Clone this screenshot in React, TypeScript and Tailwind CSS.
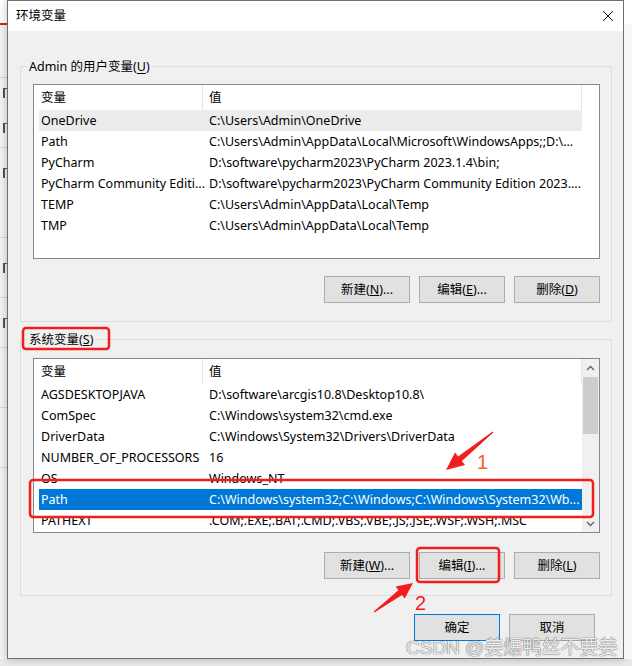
import React from 'react';

type Row = [string, string];

const userRows: Row[] = [
  ['OneDrive', 'C:\\Users\\Admin\\OneDrive'],
  ['Path', 'C:\\Users\\Admin\\AppData\\Local\\Microsoft\\WindowsApps;;D:\\...'],
  ['PyCharm', 'D:\\software\\pycharm2023\\PyCharm 2023.1.4\\bin;'],
  ['PyCharm Community Editi...', 'D:\\software\\pycharm2023\\PyCharm Community Edition 2023....'],
  ['TEMP', 'C:\\Users\\Admin\\AppData\\Local\\Temp'],
  ['TMP', 'C:\\Users\\Admin\\AppData\\Local\\Temp'],
];

const sysRows: Row[] = [
  ['AGSDESKTOPJAVA', 'D:\\software\\arcgis10.8\\Desktop10.8\\'],
  ['ComSpec', 'C:\\Windows\\system32\\cmd.exe'],
  ['DriverData', 'C:\\Windows\\System32\\Drivers\\DriverData'],
  ['NUMBER_OF_PROCESSORS', '16'],
  ['OS', 'Windows_NT'],
  ['Path', 'C:\\Windows\\system32;C:\\Windows;C:\\Windows\\System32\\Wb...'],
  ['PATHEXT', '.COM;.EXE;.BAT;.CMD;.VBS;.VBE;.JS;.JSE;.WSF;.WSH;.MSC'],
];

function Chevron({ up }: { up?: boolean }) {
  return (
    <svg width="9" height="6" viewBox="0 0 9 6" className={up ? '' : 'rotate-180'}>
      <path d="M1 5 L4.5 1.5 L8 5" fill="none" stroke="#606060" strokeWidth="1.3" />
    </svg>
  );
}

function Scrollbar() {
  return (
    <div className="w-[17px] shrink-0 bg-[#f0f0f0] flex flex-col">
      <div className="h-[17px] flex items-center justify-center">
        <Chevron up />
      </div>
      <div className="mx-px mt-px h-[57px] bg-[#cdcdcd]" />
      <div className="flex-1" />
      <div className="h-[17px] flex items-center justify-center">
        <Chevron />
      </div>
    </div>
  );
}

interface ListProps {
  rows: Row[];
  selected: number;
  active?: boolean;
  scroll?: boolean;
}

function VarList({ rows, selected, active, scroll }: ListProps) {
  return (
    <div className="h-[175px] border border-[#828790] bg-white flex overflow-hidden">
      <div className="w-[548px] shrink-0 flex flex-col">
        {/* header */}
        <div className="h-[25px] shrink-0 flex border-r border-[#e5e5e5]">
          <div className="w-[169px] shrink-0 border-r border-[#e5e5e5] pl-[7px] pt-px flex items-center">变量</div>
          <div className="flex-1 pl-[6px] pt-px flex items-center">值</div>
        </div>
        {rows.map(([name, value], i) => {
          const sel = i === selected;
          return (
            <div
              key={name + i}
              className={
                'h-[21px] shrink-0 ml-[5px] pt-[2px] flex items-center whitespace-nowrap ' +
                (sel ? (active ? 'bg-[#0078d7] text-white' : 'bg-[#ececec]') : '')
              }
            >
              <div className="w-[168px] shrink-0 pl-[2px] overflow-hidden">{name}</div>
              <div className="flex-1 pl-[2px] overflow-hidden">{value}</div>
            </div>
          );
        })}
      </div>
      {scroll ? <Scrollbar /> : <div className="flex-1" />}
    </div>
  );
}

function Btn({ children, primary }: { children: React.ReactNode; primary?: boolean }) {
  return (
    <div
      className={
        'w-[86px] h-[27px] pt-px flex items-center justify-center bg-[#e1e1e1] border ' +
        (primary ? 'border-[#0078d7]' : 'border-[#adadad]')
      }
    >
      {children}
    </div>
  );
}

function Group({ title, children }: { title: React.ReactNode; children: React.ReactNode }) {
  return (
    <fieldset className="border border-[#dcdcdc]">
      <legend className="ml-[6px] px-[2px] leading-[20px]">
        <span className="relative top-px">{title}</span>
      </legend>
      {children}
    </fieldset>
  );
}

function EdgeBand({ h, line, mark }: { h: number; line?: boolean; mark?: boolean }) {
  return (
    <div
      className={'w-[7px] flex items-center justify-end ' + (line ? 'border-b border-[#dadada]' : '')}
      style={{ height: h }}
    >
      {mark && <div className="w-[4px] h-[10px] border-l-2 border-t border-[#555]" />}
    </div>
  );
}

export default function App() {
  return (
    <div className="relative w-[632px] h-[666px] overflow-hidden bg-[#e9e9e9] font-['Noto_Sans','Noto_Sans_CJK_SC',sans-serif] text-[12.5px] text-black">
      <div className="flex">
        {/* window behind, left edge */}
        <div className="w-[7px] shrink-0 flex flex-col bg-[#f3f3f3]">
          <div className="h-[23px] bg-white" />
          <div className="h-[2px] bg-[#e02020]" />
          <div className="h-[53px] border-b border-[#d5d5d5]" />
          <EdgeBand h={30} mark />
          <EdgeBand h={40} mark line />
          <EdgeBand h={50} mark />
          <EdgeBand h={40} line />
          <EdgeBand h={60} mark line />
          <EdgeBand h={50} mark line />
          <EdgeBand h={60} line />
          <EdgeBand h={60} line />
        </div>

        {/* dialog */}
        <div className="w-[617px] h-[659px] shrink-0 border border-[#707070] bg-[#f0f0f0] flex flex-col shadow-[0_0_8px_rgba(0,0,0,0.25)]">
          <div className="h-[30px] shrink-0 bg-white flex items-center pl-[8px] pr-[9px]">
            <span className="flex-1">环境变量</span>
            <svg width="12" height="12" viewBox="0 0 12 12">
              <path d="M1 1 L11 11 M11 1 L1 11" stroke="#111" strokeWidth="1" />
            </svg>
          </div>

          <div className="pl-[12px] pr-[11px] flex flex-col">
            <div className="mt-[25px]">
              <Group title={<>Admin 的用户变量(<u className="underline-offset-2">U</u>)</>}>
                <div className="pt-[8px] pl-[12px] pr-[11px] pb-[18px]">
                  <VarList rows={userRows} selected={0} />
                  <div className="mt-[17px] flex justify-end gap-[9px]">
                    <Btn>新建(<u>N</u>)...</Btn>
                    <Btn>编辑(<u>E</u>)...</Btn>
                    <Btn>删除(<u>D</u>)</Btn>
                  </div>
                </div>
              </Group>
            </div>

            <div className="mt-[7px]">
              <Group title={<>系统变量(<u>S</u>)</>}>
                <div className="pt-[9px] pl-[12px] pr-[11px] pb-[16px]">
                  <VarList rows={sysRows} selected={5} active scroll />
                  <div className="mt-[19px] flex justify-end gap-[9px]">
                    <Btn>新建(<u>W</u>)...</Btn>
                    <Btn>编辑(<u>I</u>)...</Btn>
                    <Btn>删除(<u>L</u>)</Btn>
                  </div>
                </div>
              </Group>
            </div>

            <div className="mt-[18px] pr-[17px] flex justify-end gap-[9px]">
              <Btn primary>确定</Btn>
              <Btn>取消</Btn>
            </div>
          </div>
        </div>

        {/* window behind, right edge */}
        <div className="flex-1 flex flex-col bg-[#f6f6f6]">
          <div className="h-[24px] bg-white" />
        </div>
      </div>

      {/* annotations drawn over the screenshot */}
      <svg className="absolute inset-0 pointer-events-none" width="632" height="666" viewBox="0 0 632 666">
        <rect x="23" y="328" width="86" height="21" rx="3" fill="none" stroke="#f21d1d" strokeWidth="2.5" />
        <rect x="30" y="480" width="563" height="37" rx="3" fill="none" stroke="#f21d1d" strokeWidth="2.5" />
        <rect x="417" y="548" width="82" height="34" rx="3" fill="none" stroke="#f21d1d" strokeWidth="2.5" />
        <polygon
          points="493.3,432.4 461.9,461 465,464.9 446,470 455,452.5 458.1,456.4 492.7,431.6"
          fill="#f21d1d"
        />
        <polygon
          points="374.3,612.4 402,595 404.7,598.6 413,583 395.7,586.6 398.4,590.2 373.7,611.6"
          fill="#f21d1d"
        />
      </svg>
      <span className="absolute left-[477px] top-[452px] text-[20px] leading-none text-[#ff5a28] font-['Liberation_Sans',sans-serif]">
        1
      </span>
      <span className="absolute left-[415px] top-[593px] text-[20px] leading-none text-[#f21d1d] font-['Liberation_Sans',sans-serif]">
        2
      </span>
      <span className="absolute left-[406px] top-[637px] text-[19px] leading-[22px] text-[#ececec] [text-shadow:0_0_1px_#666,0_0_1px_#666] font-['Liberation_Sans','Noto_Sans_CJK_SC',sans-serif]">
        CSDN @姜爆鸭丝不要姜
      </span>
    </div>
  );
}
